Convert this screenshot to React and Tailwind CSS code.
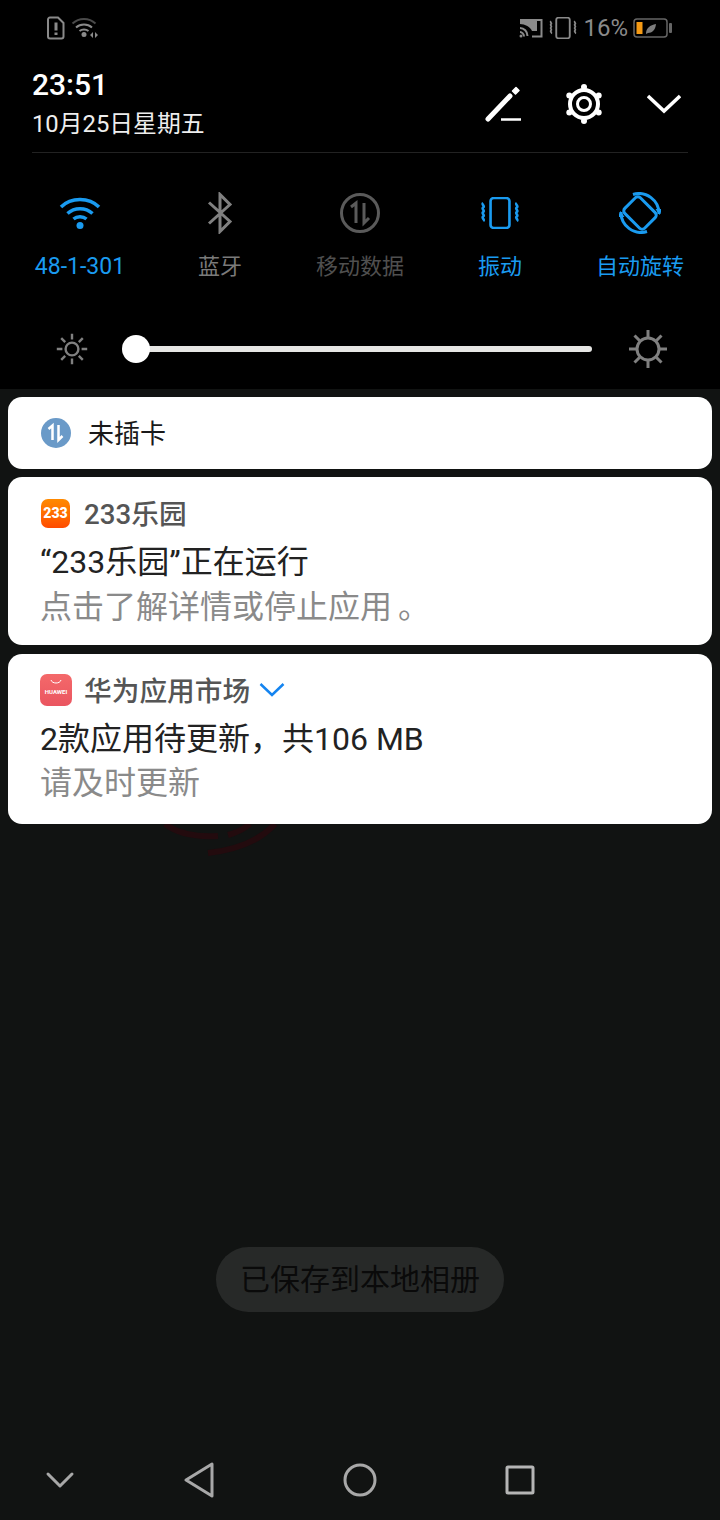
import React from 'react';

const BLUE = '#1a9bf0';

const SimAlert = () => (
	<svg width="18" height="24" viewBox="0 0 18 24" fill="none">
		<path d="M3 1.500h8l5.500 5.500v13.500a2 2 0 0 1-2 2H3a2 2 0 0 1-2-2v-17a2 2 0 0 1 2-2z" stroke="#8a8a8a" strokeWidth="2" />
		<path d="M9 6.500v8M9 16.500v2.500" stroke="#8a8a8a" strokeWidth="3" />
	</svg>
);

const WifiSmall = () => (
	<svg width="28" height="24" viewBox="0 0 28 24" fill="none">
		<path d="M1.500 7.500C8 1.500 18 1.500 24.500 7.500" stroke="#4a4a4a" strokeWidth="2" />
		<path d="M5 11.500c4.500-4 11.500-4 16 0" stroke="#8a8a8a" strokeWidth="2" />
		<path d="M8.500 15c2.500-2 6.500-2 9 0" stroke="#8a8a8a" strokeWidth="2" />
		<circle cx="13" cy="18.500" r="2.500" fill="#8a8a8a" />
		<path d="M22 16v6l-3-3zM24 16v6l3-3z" fill="#8a8a8a" />
	</svg>
);

const CastIcon = () => (
	<svg width="24" height="20" viewBox="0 0 24 20" fill="none">
		<path d="M1 2h21.500v16.500H13" stroke="#8a8a8a" strokeWidth="2" />
		<path d="M1 1h17v12h-5C11.500 9 6 6 1 6z" fill="#8a8a8a" />
		<path d="M1 10c4 0 7.500 3.500 7.500 8M1 14c2 0 4 2 4 4.500" stroke="#8a8a8a" strokeWidth="2" />
		<circle cx="2" cy="18" r="1.500" fill="#8a8a8a" />
	</svg>
);

const VibrateIcon = ({ color, w, h, sw }) => (
	<svg width={w} height={h} viewBox="0 0 40 32" fill="none" preserveAspectRatio="none">
		<rect x="11" y="1" width="18" height="30" rx="3" stroke={color} strokeWidth={sw} />
		<path d="M4 6c-2 1.500 2 3 0 4.500s2 3 0 4.500 2 3 0 4.500 2 3 0 4.500" stroke={color} strokeWidth={sw} />
		<path d="M36 6c-2 1.500 2 3 0 4.500s2 3 0 4.500 2 3 0 4.500 2 3 0 4.500" stroke={color} strokeWidth={sw} />
	</svg>
);

const Battery = () => (
	<svg width="40" height="20" viewBox="0 0 40 20" fill="none">
		<rect x="1" y="1" width="33" height="18" rx="3" stroke="#666" strokeWidth="1.500" />
		<rect x="3.500" y="4" width="6" height="12" fill="#f59a14" />
		<path d="M13 16c0-6 4-9 10-10-.5 6-4 9-8 9z" fill="#7d7d7d" />
		<rect x="36" y="5" width="3" height="10" rx="1" fill="#666" />
	</svg>
);

const EditIcon = () => (
	<svg width="38" height="36" viewBox="0 0 38 36" fill="none">
		<path d="M3 33 L25 10" stroke="#fff" strokeWidth="5" strokeLinecap="round" />
		<path d="M27.500 5l3.500-3.500 3 3-3.500 3.500z" fill="#fff" stroke="#fff" strokeWidth="1.500" strokeLinejoin="round" />
		<path d="M16 33.500h20" stroke="#fff" strokeWidth="2.500" />
	</svg>
);

const GearIcon = () => (
	<svg width="40" height="40" viewBox="0 0 40 40" fill="none">
		<circle cx="20" cy="20" r="14" stroke="#fff" strokeWidth="4" />
		<circle cx="20" cy="20" r="6.500" stroke="#fff" strokeWidth="3" />
		<g fill="#fff">
			<circle cx="20" cy="3" r="3" />
			<circle cx="20" cy="37" r="3" />
			<circle cx="5.300" cy="11.500" r="3" />
			<circle cx="34.700" cy="11.500" r="3" />
			<circle cx="5.300" cy="28.500" r="3" />
			<circle cx="34.700" cy="28.500" r="3" />
		</g>
	</svg>
);

const DataIcon = ({ color }) => (
	<svg width="40" height="40" viewBox="0 0 40 40" fill="none">
		<circle cx="20" cy="20" r="18.500" stroke={color} strokeWidth="3" />
		<path d="M11 14l5-4v20" stroke={color} strokeWidth="3" />
		<path d="M24 10v20l5-5" stroke={color} strokeWidth="3" />
	</svg>
);

const Sun = ({ size, r }) => (
	<svg width={size} height={size} viewBox="0 0 40 40" fill="none" stroke="#808080" strokeWidth="3">
		<circle cx="20" cy="20" r={r} />
		<path d="M20 1v7M20 32v7M1 20h7M32 20h7M6.500 6.500l5 5M28.500 28.500l5 5M33.500 6.500l-5 5M11.500 28.500l-5 5" />
	</svg>
);

const tiles = [
	{
		label: '48-1-301',
		color: "text-[#1a9bf0] font-['Liberation_Sans_Narrow','Roboto',sans-serif] text-[23px]",
		icon: (
			<svg width="42" height="34" viewBox="0 0 42 34" fill="none" stroke={BLUE} strokeWidth="3.500">
				<path d="M2 11C12 1 30 1 40 11" />
				<path d="M8.500 17.500c7-6.500 18-6.500 25 0" />
				<path d="M14.500 23c3.500-3 9.500-3 13 0" />
				<circle cx="21" cy="29.500" r="3.500" fill={BLUE} stroke="none" />
			</svg>
		),
	},
	{
		label: '蓝牙',
		color: 'text-[#7a7a7a]',
		icon: (
			<svg width="26" height="42" viewBox="0 0 26 42" fill="none" stroke="#808080" strokeWidth="3">
				<path d="M2 10.500L23 29.500L13 39.500V2.500L23 12.500L2 31.500" />
			</svg>
		),
	},
	{ label: '移动数据', color: 'text-[#4f4f4f]', icon: <DataIcon color="#5a5a5a" /> },
	{ label: '振动', color: 'text-[#1a9bf0]', icon: <VibrateIcon color={BLUE} w={42} h={32} sw={2.500} /> },
	{
		label: '自动旋转',
		color: 'text-[#1a9bf0]',
		icon: (
			<svg width="42" height="42" viewBox="0 0 42 42" fill="none" stroke={BLUE} strokeWidth="3">
				<rect x="10" y="7" width="22" height="28" rx="3.500" transform="rotate(-45 21 21)" />
				<path d="M14 2.500A20 20 0 0 1 40 22" />
				<path d="M28 39.500A20 20 0 0 1 2 20" />
				<path d="M40.500 23l-4-6h7zM1.500 19l4 6h-7z" fill={BLUE} stroke="none" />
			</svg>
		),
	},
];

const Tile = ({ tile }) => (
	<div className="flex flex-col items-center">
		<div className="flex h-[44px] items-center justify-center">{tile.icon}</div>
		<div className={`mt-[17px] whitespace-nowrap text-[22px] leading-[30px] ${tile.color}`}>{tile.label}</div>
	</div>
);

const Card = ({ className, children }) => <div className={`rounded-[14px] bg-white ${className}`}>{children}</div>;

export default function App() {
	return (
		<div className="relative flex h-[1520px] w-[720px] flex-col overflow-hidden bg-[#111312] font-['Roboto','Noto_Sans_CJK_SC',sans-serif]">
			{/* Quick settings panel */}
			<div className="h-[389px] bg-black">
				<div className="flex h-[56px] items-center justify-between pl-[47px] pr-[47px]">
					<div className="flex items-center gap-[6px]">
						<SimAlert />
						<WifiSmall />
					</div>
					<div className="flex items-center gap-[5px]">
						<CastIcon />
						<VibrateIcon color="#8a8a8a" w={30} h={22} sw={2.500} />
						<span className="text-[24px] leading-none text-[#8a8a8a]">16%</span>
						<Battery />
					</div>
				</div>
				<div className="mx-[32px] flex h-[97px] items-start justify-between border-b border-[#222] pt-[11px]">
					<div>
						<div className="text-[30px] font-medium leading-[36px] text-white">23:51</div>
						<div className="mt-[5px] text-[23.800px] leading-[32px] text-[#eee]">10月25日星期五</div>
					</div>
					<div className="flex items-center pt-[17px]">
						<EditIcon />
						<div className="ml-[41px]"><GearIcon /></div>
						<svg className="ml-[43px] mr-[7px]" width="34" height="20" viewBox="0 0 34 20" fill="none" stroke="#fff" strokeWidth="3.500">
							<path d="M1 2l16 15L33 2" />
						</svg>
					</div>
				</div>
				<div className="mt-[38px] grid grid-cols-5 px-[10px]">
					{tiles.map((tile) => (
						<Tile key={tile.label} tile={tile} />
					))}
				</div>
				<div className="mt-[47px] flex items-center pl-[56px] pr-[52px]">
					<Sun size={32} r={8} />
					<div className="relative ml-[48px] mr-[36px] h-[6px] flex-1 rounded-full bg-[#e6e6e4]">
						<div className="absolute left-[-14px] top-[-11px] size-[28px] rounded-full bg-white" />
					</div>
					<Sun size={40} r={11} />
				</div>
			</div>

			{/* Notifications */}
			<div className="relative mx-[8px] mt-[8px] flex flex-col">
				<Card className="flex h-[72px] items-center px-[32px]">
					<svg width="32" height="32" viewBox="0 0 32 32" fill="none">
						<circle cx="16" cy="16" r="15" fill="#6a9ac8" />
						<path d="M8.500 12l4-3.500V23" stroke="#fff" strokeWidth="2.500" />
						<path d="M18.500 8v15l4-4" stroke="#fff" strokeWidth="2.500" />
					</svg>
					<span className="relative top-[1px] ml-[16px] text-[26px] text-[#1a1a1a]">未插卡</span>
				</Card>
				<Card className="mt-[8px] h-[168px] px-[32px] pt-[18px]">
					<div className="flex h-[36px] items-center">
						<div className="ml-[1px] flex size-[29px] items-center justify-center rounded-[7px] bg-gradient-to-b from-[#ff8a00] to-[#ff4a00] text-[14px] font-black text-white">233</div>
						<span className="relative top-[2px] ml-[14px] text-[27.700px] font-medium text-[#555]">233乐园</span>
					</div>
					<div className="mt-[11px] text-[32px] leading-[40px] text-[#222]">“233乐园”正在运行</div>
					<div className="mt-[4px] text-[32px] leading-[42px] text-[#8a8a8a]">点击了解详情或停止应用<span className="pl-[6px]">。</span></div>
				</Card>
				<Card className="mt-[9px] h-[170px] px-[32px] pt-[20px]">
					<div className="flex h-[32px] items-center">
						<div className="flex h-[32px] w-[32px] flex-col items-center rounded-[7px] bg-gradient-to-b from-[#f4696a] to-[#ea5560] pt-[5px]">
							<svg width="12" height="6" viewBox="0 0 12 6" fill="none" stroke="#fff" strokeWidth="1">
								<path d="M1 1c1 4 9 4 10 0" />
							</svg>
							<span className="mt-[3px] text-[6px] leading-[8px] font-bold text-white">HUAWEI</span>
						</div>
						<span className="relative top-[2px] ml-[12px] text-[27.700px] font-medium text-[#555]">华为应用市场</span>
						<svg className="ml-[9px]" width="26" height="16" viewBox="0 0 26 16" fill="none" stroke="#1484f0" strokeWidth="2.500">
							<path d="M1.500 2l11.500 11L24.500 2" />
						</svg>
					</div>
					<div className="mt-[12px] text-[32px] leading-[42px] text-[#222]">2款应用待更新，共106 MB</div>
					<div className="mt-[2px] text-[32px] leading-[42px] text-[#8a8a8a]">请及时更新</div>
				</Card>
				{/* Dim wallpaper logo peeking out under the last card */}
				<svg className="absolute left-[150px] top-[427px]" width="125" height="34" viewBox="0 0 125 34" fill="none" stroke="#230b0e" strokeWidth="6">
					<path d="M7 0Q25 14 60 12" />
					<path d="M70 11Q82 8 92 0" />
					<path d="M50 29Q95 24 117 0" />
				</svg>
			</div>

			{/* Toast */}
			<div className="mt-[423px] flex h-[65px] w-[288px] items-center justify-center self-center rounded-full bg-[#272928] text-[30px] text-[#0a0a0a]">
				已保存到本地相册
			</div>

			{/* Navigation bar */}
			<div className="mt-auto flex h-[80px] items-center pl-[44px]">
				<svg width="32" height="18" viewBox="0 0 32 18" fill="none" stroke="#a8a8a8" strokeWidth="3" strokeLinecap="round" strokeLinejoin="round">
					<path d="M4 3l12 12L28 3" />
				</svg>
				<svg className="ml-[107px]" width="32" height="36" viewBox="0 0 32 36" fill="none" stroke="#a8a8a8" strokeWidth="3" strokeLinejoin="round">
					<path d="M29 2v32L3 18z" />
				</svg>
				<svg className="ml-[128px]" width="34" height="34" viewBox="0 0 34 34" fill="none" stroke="#a8a8a8" strokeWidth="3">
					<circle cx="17" cy="17" r="15" />
				</svg>
				<svg className="ml-[127px]" width="32" height="32" viewBox="0 0 32 32" fill="none" stroke="#b5b5b5" strokeWidth="3" strokeLinejoin="round">
					<rect x="3" y="3" width="26" height="26" rx="1" />
				</svg>
			</div>
		</div>
	);
}
